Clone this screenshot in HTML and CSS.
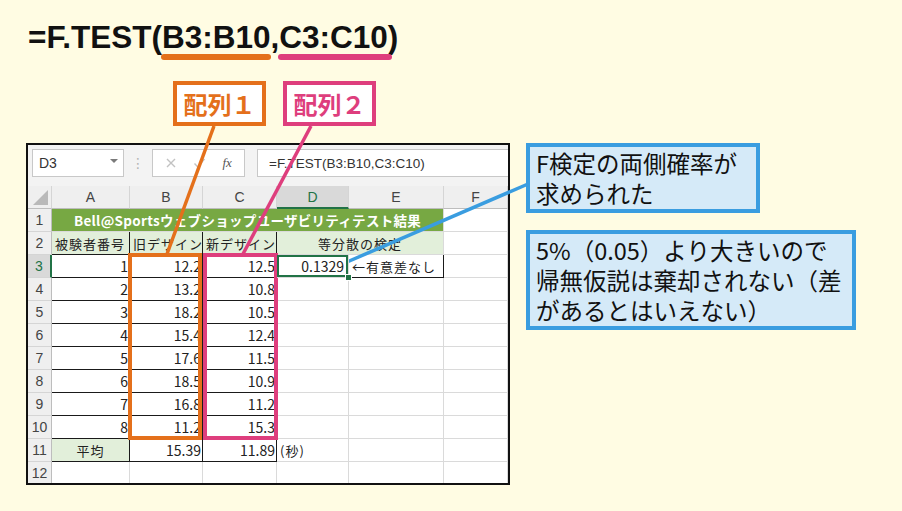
FILE: index.html
```html
<!DOCTYPE html>
<html lang="ja">
<head>
  <meta charset="UTF-8">
  <meta name="viewport" content="width=device-width, initial-scale=1.0">
  <title>F.TEST関数</title>
  <link rel="stylesheet" href="styles.css">
</head>
<body>
  <div class="page">
    <h1 class="formula">=F.TEST(<span class="arg arg-b">B3:B10</span>,<span class="arg arg-c">C3:C10</span>)</h1>

    <div class="labels">
      <span class="label label-b">配列１</span>
      <span class="label label-c">配列２</span>
    </div>

    <div class="main">
      <div class="sheet">
        <!-- name box / formula bar -->
        <div class="fbar">
          <div class="namebox">D3<span class="caret"></span></div>
          <div class="dots">⋮</div>
          <div class="fnbox">
            <svg class="ico" width="12" height="12" viewBox="0 0 12 12"><path d="M2 2L10 10M10 2L2 10" stroke="#c2c2c2" stroke-width="1.4" fill="none"/></svg>
            <svg class="ico" width="13" height="12" viewBox="0 0 13 12"><path d="M1.5 6.5L4.8 10L11.5 2" stroke="#c2c2c2" stroke-width="1.4" fill="none"/></svg>
            <i class="fx">fx</i>
          </div>
          <div class="input">=F.TEST(B3:B10,C3:C10)</div>
        </div>

        <div class="grid">
          <div class="ch corner"></div>
          <div class="ch">A</div>
          <div class="ch">B</div>
          <div class="ch">C</div>
          <div class="ch on">D</div>
          <div class="ch">E</div>
          <div class="ch">F</div>

          <div class="rh">1</div>
          <div class="c title">Bell@Sportsウェブショップユーザビリティテスト結果</div>
          <div class="c"></div>

          <div class="rh">2</div>
          <div class="c head ln">被験者番号</div>
          <div class="c head ln">旧デザイン</div>
          <div class="c head ln">新デザイン</div>
          <div class="c head ctr merge2">等分散の検定</div>
          <div class="c"></div>

          <div class="rh on">3</div>
          <div class="c num ln">1</div>
          <div class="c num ln">12.2</div>
          <div class="c num ln">12.5</div>
          <div class="c num sel">0.1329</div>
          <div class="c ln">←有意差なし</div>
          <div class="c"></div>

          <div class="rh">4</div>
          <div class="c num ln">2</div>
          <div class="c num ln">13.2</div>
          <div class="c num ln">10.8</div>
          <div class="c"></div><div class="c"></div><div class="c"></div>

          <div class="rh">5</div>
          <div class="c num ln">3</div>
          <div class="c num ln">18.2</div>
          <div class="c num ln">10.5</div>
          <div class="c"></div><div class="c"></div><div class="c"></div>

          <div class="rh">6</div>
          <div class="c num ln">4</div>
          <div class="c num ln">15.4</div>
          <div class="c num ln">12.4</div>
          <div class="c"></div><div class="c"></div><div class="c"></div>

          <div class="rh">7</div>
          <div class="c num ln">5</div>
          <div class="c num ln">17.6</div>
          <div class="c num ln">11.5</div>
          <div class="c"></div><div class="c"></div><div class="c"></div>

          <div class="rh">8</div>
          <div class="c num ln">6</div>
          <div class="c num ln">18.5</div>
          <div class="c num ln">10.9</div>
          <div class="c"></div><div class="c"></div><div class="c"></div>

          <div class="rh">9</div>
          <div class="c num ln">7</div>
          <div class="c num ln">16.8</div>
          <div class="c num ln">11.2</div>
          <div class="c"></div><div class="c"></div><div class="c"></div>

          <div class="rh">10</div>
          <div class="c num ln">8</div>
          <div class="c num ln">11.2</div>
          <div class="c num ln">15.3</div>
          <div class="c"></div><div class="c"></div><div class="c"></div>

          <div class="rh">11</div>
          <div class="c head ctr ln">平均</div>
          <div class="c num ln">15.39</div>
          <div class="c num ln">11.89</div>
          <div class="c">(秒)</div>
          <div class="c"></div><div class="c"></div>

          <div class="rh">12</div>
          <div class="c"></div><div class="c"></div><div class="c"></div>
          <div class="c"></div><div class="c"></div><div class="c"></div>
        </div>
      </div>

      <div class="notes">
        <p class="note note-short">F検定の両側確率が<br>求められた</p>
        <p class="note note-long">5%（0.05）より大きいので<br>帰無仮説は棄却されない（差<br>があるとはいえない）</p>
      </div>
    </div>

    <!-- range frames and leader lines -->
    <svg class="marks" width="902" height="511" viewBox="0 0 902 511">
      <line x1="214" y1="126" x2="167" y2="254" stroke="#e4701b" stroke-width="3.5"/>
      <line x1="311" y1="126" x2="243" y2="254" stroke="#de3e7d" stroke-width="3.5"/>
      <rect x="130" y="255" width="70" height="183" fill="none" stroke="#e4701b" stroke-width="4"/>
      <rect x="205" y="255" width="71" height="183" fill="none" stroke="#de3e7d" stroke-width="4"/>
      <line x1="347" y1="262" x2="528" y2="184" stroke="#3a9de0" stroke-width="3.5"/>
    </svg>
  </div>
</body>
</html>
```

FILE: styles.css
```css
html, body {
  margin: 0;
}

body {
  width: 902px;
  height: 511px;
  overflow: hidden;
  background: #fffce3;
  font-family: "Noto Sans CJK JP", sans-serif;
  color: #111;
}

.page {
  position: relative;
  height: 511px;
  box-sizing: border-box;
  padding: 22px 0 0 26px;
}

.formula {
  margin: 0 0 0 2px;
  font: bold 31.5px/31px "Liberation Sans", "Noto Sans CJK JP", sans-serif;
  color: #111;
}

.arg {
  position: relative;
}

.arg::after {
  content: "";
  position: absolute;
  left: -1px;
  right: -1px;
  top: calc(100% - 1px);
  height: 6px;
  border-radius: 3px;
}

.arg-b::after { background: #e4701b; }
.arg-c::after { background: #de3e7d; right: -4px; }

.labels {
  display: flex;
  gap: 17px;
  margin: 28px 0 0 147px;
}

.label {
  box-sizing: border-box;
  width: 93px;
  height: 45px;
  border: 4px solid;
  background: #fff;
  display: flex;
  align-items: center;
  justify-content: center;
  font-size: 24px;
  font-weight: 700;
}

.label-b { border-color: #e4701b; color: #e4701b; }
.label-c { border-color: #de3e7d; color: #de3e7d; }

.main {
  display: flex;
  align-items: flex-start;
  gap: 16px;
  margin-top: 17px;
}

/* spreadsheet window */
.sheet {
  box-sizing: border-box;
  width: 484px;
  height: 342px;
  border: 2px solid #111;
  background: #fff;
  overflow: hidden;
}

.fbar {
  height: 41px;
  box-sizing: border-box;
  padding: 4px 0 0 4px;
  background: #f3f3f3;
  display: flex;
  align-items: flex-start;
}

.namebox,
.fnbox,
.input {
  height: 28px;
  box-sizing: border-box;
  border: 1px solid #c8c8c8;
  background: #fff;
  display: flex;
  align-items: center;
}

.namebox {
  width: 92px;
  justify-content: space-between;
  padding: 0 5px 0 6px;
  font: 14px "Liberation Sans", sans-serif;
  color: #333;
}

.caret {
  border-left: 4px solid transparent;
  border-right: 4px solid transparent;
  border-top: 4px solid #7a7a7a;
  margin-top: -4px;
}

.dots {
  width: 28px;
  text-align: center;
  color: #b5b5b5;
  font: 14px/28px "DejaVu Sans", sans-serif;
}

.fnbox {
  width: 93px;
  justify-content: space-around;
  padding: 0 4px;
}

.fnbox .fx {
  font: italic 13px "Liberation Serif", serif;
  color: #555;
}

.input {
  flex: 1;
  margin-left: 12px;
  border-right: none;
  padding-left: 11px;
  font: 13.5px "Liberation Sans", sans-serif;
  color: #333;
}

.grid {
  display: grid;
  grid-template-columns: 24px 78px 73px 74px 72px 95px 1fr;
  grid-auto-rows: 23px;
}

.ch,
.rh {
  box-sizing: border-box;
  display: flex;
  align-items: center;
  justify-content: center;
  background: #efefef;
  font: 14px "Liberation Sans", sans-serif;
  color: #444;
}

.ch {
  border-right: 1px solid #d5d5d5;
  border-bottom: 1px solid #bdbdbd;
}

.rh {
  border-right: 1px solid #bdbdbd;
  border-bottom: 1px solid #d5d5d5;
}

.ch.on {
  background: #d9d9d9;
  color: #217346;
  border-bottom: 2px solid #217346;
}

.rh.on {
  background: #d9d9d9;
  color: #217346;
  border-right: 2px solid #217346;
}

.corner {
  position: relative;
}

.corner::after {
  content: "";
  position: absolute;
  right: 3px;
  bottom: 3px;
  width: 15px;
  height: 15px;
  background: #b9b9b9;
  clip-path: polygon(100% 0, 100% 100%, 0 100%);
}

.c {
  box-sizing: border-box;
  display: flex;
  align-items: center;
  padding: 0 3px;
  border-right: 1px solid #dadada;
  border-bottom: 1px solid #dadada;
  white-space: nowrap;
  overflow: hidden;
  font-size: 13px;
  letter-spacing: 1px;
  color: #222;
}

.num {
  justify-content: flex-end;
  letter-spacing: 0;
  font-size: 14px;
  padding-right: 1px;
}

.ctr {
  justify-content: center;
}

.ln {
  border-right-color: #1a1a1a;
  border-bottom-color: #1a1a1a;
}

.title {
  grid-column: span 5;
  justify-content: center;
  background: #77a843;
  color: #fff;
  font-weight: 700;
  font-size: 13.5px;
  letter-spacing: 0.3px;
}

.head {
  background: #e2efda;
}

.merge2 {
  grid-column: span 2;
}

.sel {
  position: relative;
  z-index: 1;
  overflow: visible;
  box-shadow: inset 0 0 0 2px #217346;
  padding-right: 4px;
}

.sel::after {
  content: "";
  position: absolute;
  right: -4px;
  bottom: -4px;
  width: 5px;
  height: 5px;
  background: #217346;
  border: 1px solid #fff;
}

/* callouts */
.notes {
  display: flex;
  flex-direction: column;
  gap: 17px;
}

.note {
  margin: 0;
  box-sizing: border-box;
  border: 4px solid #3a9de0;
  background: #d5eaf8;
  padding: 1px 0 0 6px;
  font-size: 23.5px;
  line-height: 30px;
  white-space: nowrap;
  color: #111;
}

.note-short {
  width: 234px;
  height: 70px;
}

.note-long {
  width: 330px;
  height: 100px;
}

.marks {
  position: absolute;
  left: 0;
  top: 0;
  pointer-events: none;
}
```
